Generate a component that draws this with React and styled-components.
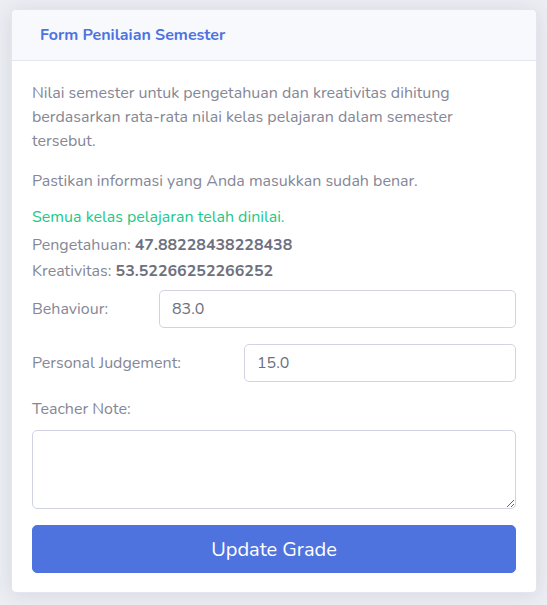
import React from "react";
import styled, { createGlobalStyle } from "styled-components";

const Global = createGlobalStyle`
  html, body { margin: 0; padding: 0; }
  body {
    background: #eceef4;
    font-family: "Nunito", "Lato", "Noto Sans", sans-serif;
    color: #858796;
  }
  * { box-sizing: border-box; }
`;

const Page = styled.div`
  padding: 9px 10px 13px 11px;
`;

const Card = styled.div`
  background: #fff;
  border: 1px solid #e3e6f0;
  border-radius: 5px;
  box-shadow: 0 2px 20px 0 rgba(58, 59, 69, 0.12);
  overflow: hidden;
`;

const Header = styled.div`
  height: 51px;
  background: #f8f9fc;
  border-bottom: 1px solid #e3e6f0;
  display: flex;
  align-items: center;
  padding: 0 28px;
`;

const Title = styled.h6`
  margin: 0;
  font-size: 16px;
  font-weight: 700;
  color: #4e73df;
`;

const Body = styled.div`
  padding: 20px 20px 19px 20px;
  display: flex;
  flex-direction: column;
`;

const Para = styled.p`
  margin: 0 0 16px 0;
  font-size: 16px;
  line-height: 24px;
  color: #858796;
`;

const Line = styled.div`
  font-size: 16px;
  line-height: 24px;
  color: ${(p) => (p.$success ? "#1cc88a" : "#858796")};
  margin-top: ${(p) => p.$mt || 0}px;
`;

const Strong = styled.b`
  font-weight: 700;
  color: #6e707e;
`;

const Row = styled.div`
  display: flex;
  align-items: center;
  margin-top: ${(p) => p.$mt || 0}px;
`;

const Label = styled.label`
  font-size: 16px;
  line-height: 24px;
  color: #858796;
  width: ${(p) => p.$w}px;
  flex-shrink: 0;
`;

const Input = styled.input`
  flex: 1;
  min-width: 0;
  height: 38px;
  padding: 6px 12px;
  font-family: inherit;
  font-size: 16px;
  color: #6e707e;
  border: 1px solid #d1d3e2;
  border-radius: 5px;
  background: #fff;
  outline: none;
`;

const TextArea = styled.textarea`
  display: block;
  width: 100%;
  height: 79px;
  padding: 6px 12px;
  font-family: inherit;
  font-size: 16px;
  color: #6e707e;
  border: 1px solid #d1d3e2;
  border-radius: 5px;
  margin-top: 9px;
  outline: none;
`;

const Button = styled.button`
  margin-top: 16px;
  width: 100%;
  height: 48px;
  border: 1px solid #4e73df;
  background: #4e73df;
  color: #fff;
  font-family: inherit;
  font-size: 20px;
  border-radius: 5px;
  cursor: pointer;
`;

export default function App() {
  return (
    <>
      <Global />
      <Page>
        <Card>
          <Header>
            <Title>Form Penilaian Semester</Title>
          </Header>
          <Body>
            <Para>
              Nilai semester untuk pengetahuan dan kreativitas dihitung
              berdasarkan rata-rata nilai kelas pelajaran dalam semester
              tersebut.
            </Para>
            <Para>Pastikan informasi yang Anda masukkan sudah benar.</Para>
            <Line $success $mt={-4}>Semua kelas pelajaran telah dinilai.</Line>
            <Line $mt={4}>
              Pengetahuan: <Strong>47.88228438228438</Strong>
            </Line>
            <Line $mt={2}>
              Kreativitas: <Strong>53.52266252266252</Strong>
            </Line>
            <Row $mt={7}>
              <Label $w={127}>Behaviour:</Label>
              <Input defaultValue="83.0" />
            </Row>
            <Row $mt={16}>
              <Label $w={212}>Personal Judgement:</Label>
              <Input defaultValue="15.0" />
            </Row>
            <Line $mt={15}>Teacher Note:</Line>
            <TextArea />
            <Button>Update Grade</Button>
          </Body>
        </Card>
      </Page>
    </>
  );
}
